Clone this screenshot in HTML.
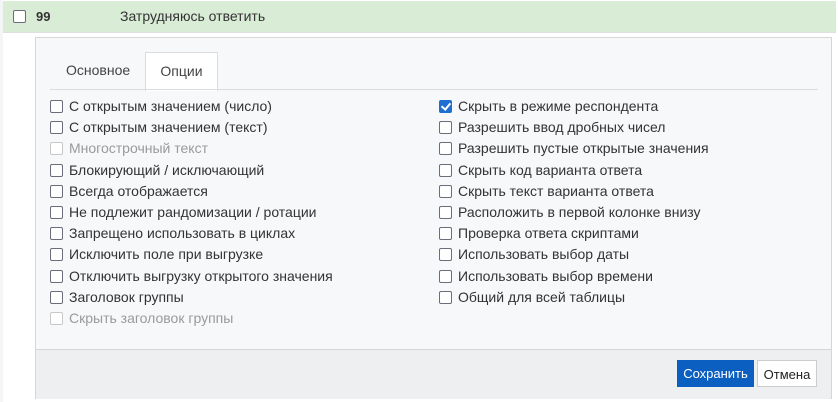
<!DOCTYPE html><html><head><style>
body{margin:0;width:838px;height:402px;background:#fff;font-family:"Liberation Sans",sans-serif;font-size:13px;color:#333;position:relative;overflow:hidden}
.strip{position:absolute;left:0;top:0;width:3px;height:402px;background:#f4f5f7}
.row{position:absolute;left:3px;top:1px;width:833px;height:31px;background:#d9ecd6;border-bottom:1px solid #e0e0e0}
.cb{display:inline-block;width:11px;height:11px;border:1.5px solid #6c6c7a;border-radius:2px;background:#fff;box-sizing:content-box;flex:none}
.panel{position:absolute;left:35px;top:37px;width:795px;height:360px;border:1px solid #d6d6d6;background:#f7f8fa}
.tabline{position:absolute;left:14px;top:51px;width:768px;height:1px;background:#dcdcdc}
.tab{position:absolute;top:14px;height:37px;line-height:37px;font-size:14px;color:#444}
.t2{left:109px;width:71px;background:#fff;border:1px solid #dcdcdc;border-bottom:none;text-align:center;height:38px}
.col{position:absolute;top:58px;font-size:14px}
.it{height:21.2px;line-height:21px;white-space:nowrap;display:flex;align-items:center}
.it .cb{margin-right:6px}
.dis{color:#9a9a9a}.dis .cb{border-color:#c8c8c8}
.chk{background:#1f6fd0;border-color:#1f6fd0;position:relative}
.chk:after{content:"";position:absolute;left:3px;top:0px;width:4px;height:7px;border:solid #fff;border-width:0 2px 2px 0;transform:rotate(40deg)}
.foot{position:absolute;left:0;top:311px;width:795px;height:49px;background:#eeeff1;border-top:1px solid #d6d6d6}
.btn{position:absolute;top:10px;height:27px;line-height:27px;font-size:13px;text-align:center;box-sizing:border-box}
</style></head><body>
<div class="strip"></div>
<div class="row"><span class="cb" style="position:absolute;left:10px;top:9px"></span><b style="position:absolute;left:33px;top:8px;font-size:13px">99</b><span style="position:absolute;left:117px;top:7px;font-size:14px">Затрудняюсь ответить</span></div>
<div class="panel">
<div class="tab" style="left:30px">Основное</div>
<div class="tab t2">Опции</div>
<div class="tabline"></div>
<div class="col" style="left:14px">
<div class="it"><span class="cb"></span>С открытым значением (число)</div>
<div class="it"><span class="cb"></span>С открытым значением (текст)</div>
<div class="it dis"><span class="cb"></span>Многострочный текст</div>
<div class="it"><span class="cb"></span>Блокирующий / исключающий</div>
<div class="it"><span class="cb"></span>Всегда отображается</div>
<div class="it"><span class="cb"></span>Не подлежит рандомизации / ротации</div>
<div class="it"><span class="cb"></span>Запрещено использовать в циклах</div>
<div class="it"><span class="cb"></span>Исключить поле при выгрузке</div>
<div class="it"><span class="cb"></span>Отключить выгрузку открытого значения</div>
<div class="it"><span class="cb"></span>Заголовок группы</div>
<div class="it dis"><span class="cb"></span>Скрыть заголовок группы</div>
</div>
<div class="col" style="left:403px">
<div class="it"><span class="cb chk"></span>Скрыть в режиме респондента</div>
<div class="it"><span class="cb"></span>Разрешить ввод дробных чисел</div>
<div class="it"><span class="cb"></span>Разрешить пустые открытые значения</div>
<div class="it"><span class="cb"></span>Скрыть код варианта ответа</div>
<div class="it"><span class="cb"></span>Скрыть текст варианта ответа</div>
<div class="it"><span class="cb"></span>Расположить в первой колонке внизу</div>
<div class="it"><span class="cb"></span>Проверка ответа скриптами</div>
<div class="it"><span class="cb"></span>Использовать выбор даты</div>
<div class="it"><span class="cb"></span>Использовать выбор времени</div>
<div class="it"><span class="cb"></span>Общий для всей таблицы</div>
</div>
<div class="foot">
<div class="btn" style="left:641px;width:77px;background:#0a5fc0;color:#fff">Сохранить</div>
<div class="btn" style="left:721px;width:60px;background:#fff;border:1px solid #ccc;color:#222">Отмена</div>
</div>
</div>
</body></html>
